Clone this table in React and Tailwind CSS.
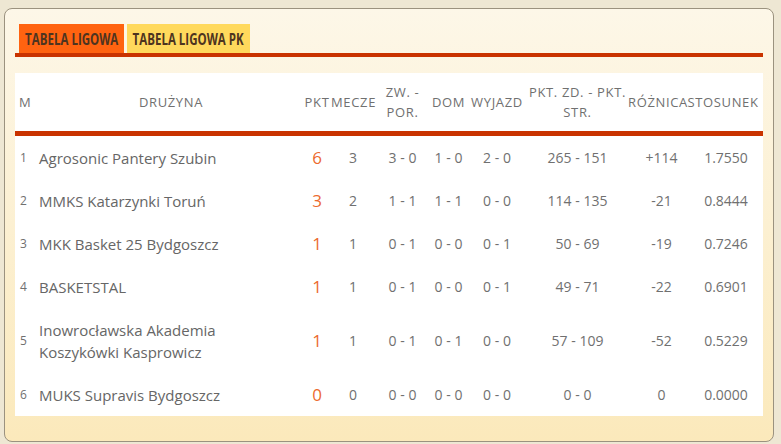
import React from 'react'

const ROWS = [
  { m: 1, team: ['Agrosonic Pantery Szubin'], pkt: 6, mecze: 3, zw: '3 - 0', dom: '1 - 0', wyj: '2 - 0', pts: '265 - 151', diff: '+114', st: '1.7550' },
  { m: 2, team: ['MMKS Katarzynki Toruń'], pkt: 3, mecze: 2, zw: '1 - 1', dom: '1 - 1', wyj: '0 - 0', pts: '114 - 135', diff: '-21', st: '0.8444' },
  { m: 3, team: ['MKK Basket 25 Bydgoszcz'], pkt: 1, mecze: 1, zw: '0 - 1', dom: '0 - 0', wyj: '0 - 1', pts: '50 - 69', diff: '-19', st: '0.7246' },
  { m: 4, team: ['BASKETSTAL'], pkt: 1, mecze: 1, zw: '0 - 1', dom: '0 - 0', wyj: '0 - 1', pts: '49 - 71', diff: '-22', st: '0.6901' },
  { m: 5, team: ['Inowrocławska Akademia', 'Koszykówki Kasprowicz'], pkt: 1, mecze: 1, zw: '0 - 1', dom: '0 - 1', wyj: '0 - 0', pts: '57 - 109', diff: '-52', st: '0.5229' },
  { m: 6, team: ['MUKS Supravis Bydgoszcz'], pkt: 0, mecze: 0, zw: '0 - 0', dom: '0 - 0', wyj: '0 - 0', pts: '0 - 0', diff: '0', st: '0.0000' },
]

const GRID = 'grid grid-cols-[24px_264px_28px_44px_55px_37px_60px_101px_53px_84px] items-center'

export default function App() {
  return (
    <div className="w-[781px] h-[444px] bg-[#eee7d3] pt-[8px] pl-[4px]" style={{ fontFamily: '"Open Sans", "Noto Sans", sans-serif' }}>
      <div className="w-[770px] h-[434px] rounded-[8px] border border-[#9b927f] bg-gradient-to-b from-[#fdf7e8] to-[#fbe9bb] pt-[15px] px-[10px]">
        {/* zakładki */}
        <div className="flex gap-[3px] pl-[4px] h-[29px]">
          <div className="w-[105px] bg-[#ff6310] flex items-center justify-center text-[16px] font-bold text-[#4d3420]">
            <span className="inline-block whitespace-nowrap scale-x-[0.72]">TABELA LIGOWA</span>
          </div>
          <div className="w-[123px] bg-[#ffd95c] flex items-center justify-center text-[16px] font-bold text-[#4d3420]">
            <span className="inline-block whitespace-nowrap scale-x-[0.72]">TABELA LIGOWA PK</span>
          </div>
        </div>
        <div className="h-[4px] bg-[#c93300]" />

        {/* tabela */}
        <div className="mt-[16px] bg-white">
          <div className={`${GRID} h-[58px] text-[13px] tracking-[0.05em] text-[#707070] leading-[20px] uppercase`}>
            <div className="pl-[4px]">M</div>
            <div className="text-center">DRUŻYNA</div>
            <div className="text-center">PKT</div>
            <div className="text-center">MECZE</div>
            <div className="text-center">ZW. -<br />POR.</div>
            <div className="text-center">DOM</div>
            <div className="text-center">WYJAZD</div>
            <div className="text-center">PKT. ZD. - PKT.<br />STR.</div>
            <div className="text-center">RÓŻNICA</div>
            <div className="text-center whitespace-nowrap">STOSUNEK</div>
          </div>
          <div className="h-[5px] bg-[#c93300]" />
          {ROWS.map(r => (
            <div key={r.m} className={`${GRID} py-[10.5px] text-[14px] text-[#707070]`}>
              <div className="pl-[5px] text-[12px]">{r.m}</div>
              <div className="text-[15px] leading-[22px] text-[#666]">
                {r.team.map((t, i) => <div key={i}>{t}</div>)}
              </div>
              <div className="text-center text-[17px] leading-[22px] text-[#ec6a2e]">{r.pkt}</div>
              <div className="text-center">{r.mecze}</div>
              <div className="text-center">{r.zw}</div>
              <div className="text-center">{r.dom}</div>
              <div className="text-center">{r.wyj}</div>
              <div className="text-center">{r.pts}</div>
              <div className="text-center pl-[14px]">{r.diff}</div>
              <div className="text-center pl-[6px]">{r.st}</div>
            </div>
          ))}
        </div>
      </div>
    </div>
  )
}
